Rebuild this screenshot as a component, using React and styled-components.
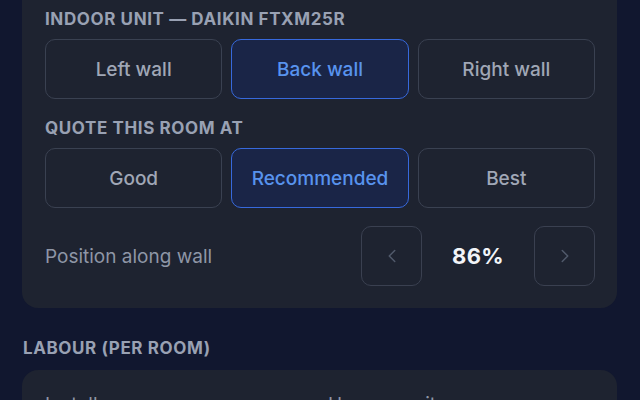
import * as React from 'react'
import styled, { createGlobalStyle } from 'styled-components'
import { ChevronLeft, ChevronRight } from 'lucide-react'

const GlobalStyle = createGlobalStyle`
  html, body {
    margin: 0;
    padding: 0;
    background: #11172f;
    overflow: hidden;
  }
  body {
    font-family: Inter, 'Noto Sans', 'Liberation Sans', sans-serif;
    -webkit-font-smoothing: antialiased;
  }
  * {
    box-sizing: border-box;
  }
`

const Screen = styled.div`
  width: 640px;
  height: 400px;
  overflow: hidden;
  padding: 0 23px 0 22px;
`

const Card = styled.section`
  background: #1e2330;
  border-radius: 16px;
  margin-top: ${(props) => props.mt || '0'};
  padding: ${(props) => props.pad || '22px 22px 22px 23px'};
  display: flex;
  flex-direction: column;
`

const Label = styled.h3`
  margin: 0;
  font-size: 17px;
  line-height: 18px;
  font-weight: 700;
  letter-spacing: 0.6px;
  text-transform: uppercase;
  color: #99a1b3;
  padding-left: ${(props) => props.indent || '0'};
`

const Segments = styled.div`
  display: grid;
  grid-template-columns: repeat(3, 1fr);
  gap: 9px;
  margin-top: 11px;
  margin-bottom: ${(props) => props.mb || '0'};
`

const Option = styled.button`
  height: 60px;
  border-radius: 10px;
  font-family: inherit;
  font-size: 19px;
  font-weight: 500;
  cursor: pointer;
  background: ${(props) => (props.active ? '#1a2547' : 'transparent')};
  border: 1.5px solid ${(props) => (props.active ? '#3769dc' : '#3a4151')};
  color: ${(props) => (props.active ? '#5893ee' : '#a0a7b6')};
`

const StepRow = styled.div`
  display: flex;
  align-items: center;
  margin-top: 18px;
`

const RowLabel = styled.span`
  flex: 1;
  font-size: 19px;
  color: #8e96a6;
`

const Stepper = styled.div`
  display: flex;
  align-items: center;
`

const StepButton = styled.button`
  width: 61px;
  height: 60px;
  border-radius: 10px;
  border: 1.5px solid #3a4050;
  background: transparent;
  color: #515a6b;
  display: flex;
  align-items: center;
  justify-content: center;
  padding: 0;
  cursor: pointer;
`

const Value = styled.span`
  width: 112px;
  text-align: center;
  font-size: 22px;
  font-weight: 700;
  color: #f2f4f8;
  letter-spacing: 0.4px;
`

const Section = styled.div`
  margin-top: 31px;
`

const FieldGrid = styled.div`
  display: grid;
  grid-template-columns: 1fr 1fr;
  gap: 16px;
`

const FieldName = styled.span`
  font-size: 19px;
  line-height: 22px;
  color: #8e96a6;
`

const walls = ['Left wall', 'Back wall', 'Right wall']
const tiers = ['Good', 'Recommended', 'Best']

export default function App() {
  const [wall, setWall] = React.useState('Back wall')
  const [tier, setTier] = React.useState('Recommended')
  const [pos, setPos] = React.useState(86)

  return (
    <Screen>
      <GlobalStyle />
      <Card mt='-20px' pad='30px 22px 22px 23px'>
        <Label>Indoor unit — Daikin FTXM25R</Label>
        <Segments mb='20px'>
          {walls.map((w) => (
            <Option key={w} active={w === wall} onClick={() => setWall(w)}>
              {w}
            </Option>
          ))}
        </Segments>

        <Label>Quote this room at</Label>
        <Segments>
          {tiers.map((t) => (
            <Option key={t} active={t === tier} onClick={() => setTier(t)}>
              {t}
            </Option>
          ))}
        </Segments>

        <StepRow>
          <RowLabel>Position along wall</RowLabel>
          <Stepper>
            <StepButton onClick={() => setPos(Math.max(0, pos - 1))}>
              <ChevronLeft size={22} strokeWidth={1.6} />
            </StepButton>
            <Value>{pos}%</Value>
            <StepButton onClick={() => setPos(Math.min(100, pos + 1))}>
              <ChevronRight size={22} strokeWidth={1.6} />
            </StepButton>
          </Stepper>
        </StepRow>
      </Card>

      <Section>
        <Label indent='1px'>Labour (per room)</Label>
        <Card mt='13px' pad='24px 22px 24px 23px'>
          <FieldGrid>
            <FieldName>Installers</FieldName>
            <FieldName>Hours on site</FieldName>
          </FieldGrid>
        </Card>
      </Section>
    </Screen>
  )
}
